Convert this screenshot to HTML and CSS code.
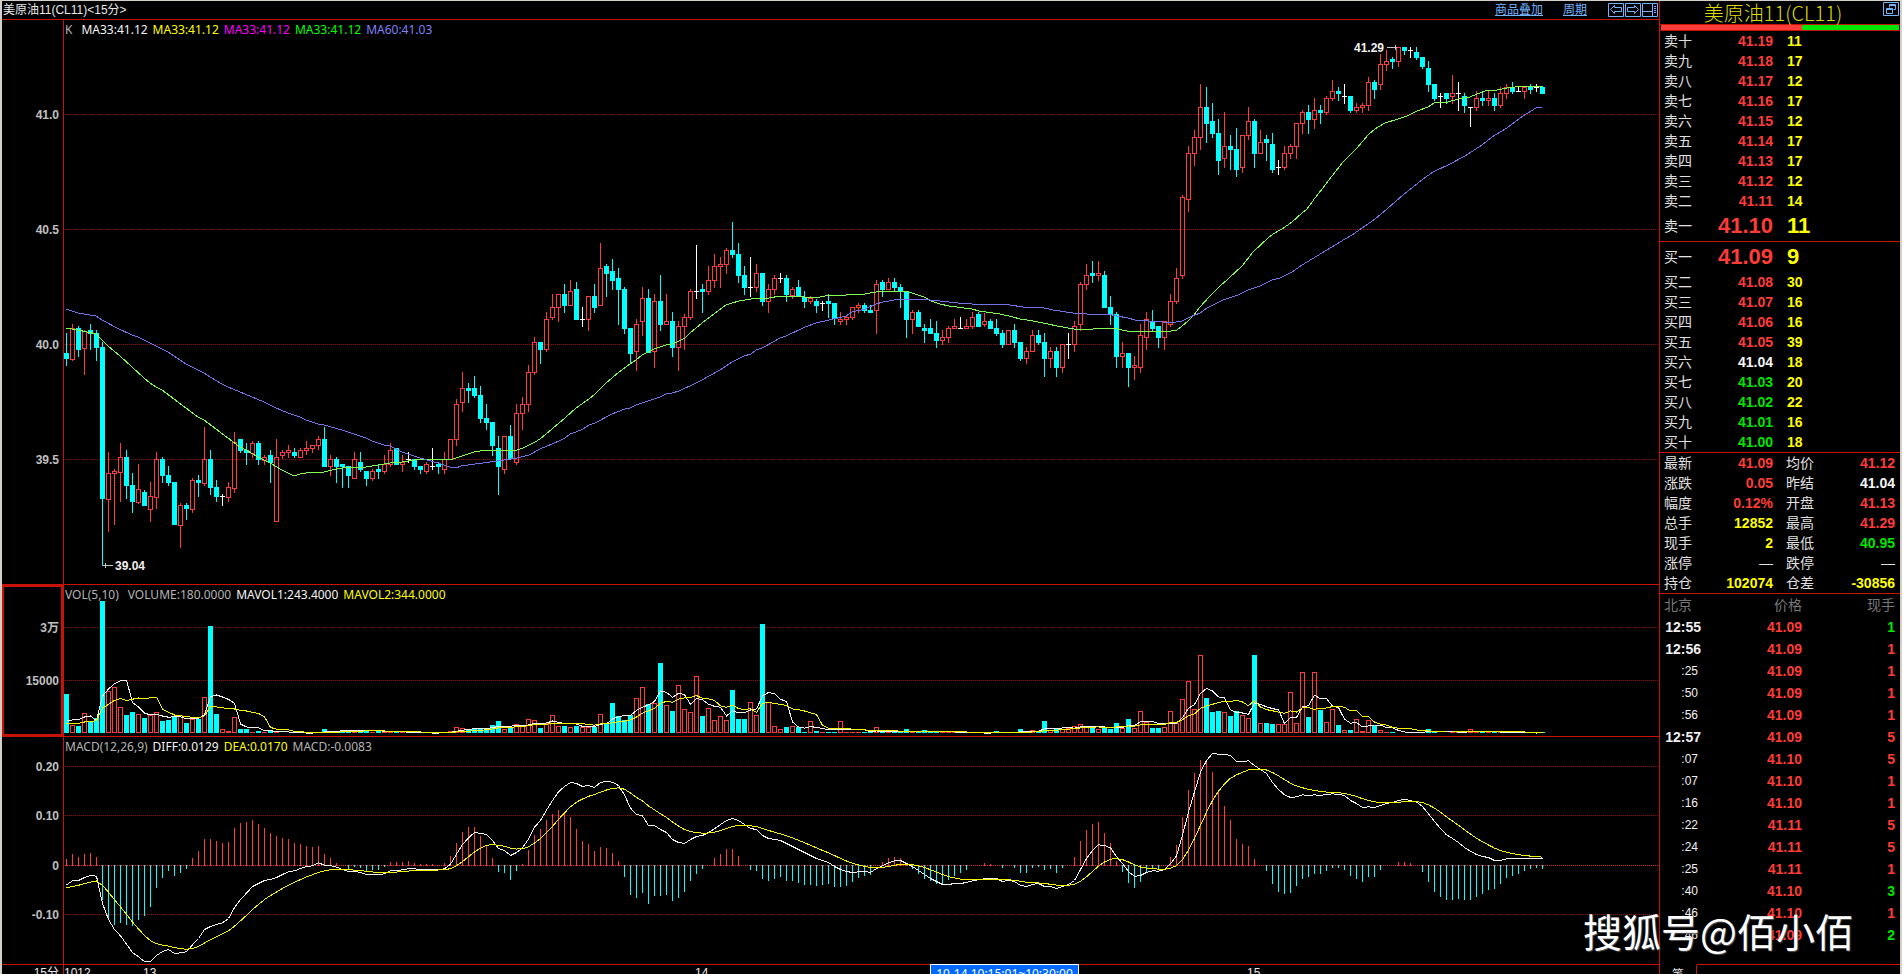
FILE: index.html
```html
<!DOCTYPE html>
<html lang="zh-CN">
<head>
<meta charset="utf-8">
<title>美原油11(CL11)</title>
<link rel="stylesheet" href="styles.css">
</head>
<body>
<div class="terminal">
  <main class="charts">
    <header class="toolbar">
      <h1 class="toolbar-title">美原油11(CL11)&lt;15分&gt;</h1>
      <nav class="toolbar-links">
        <a class="tool-link" href="#overlay">商品叠加</a>
        <a class="tool-link" href="#period">周期</a>
      </nav>
      <div class="toolbar-buttons">
        <button class="icon-btn" type="button" aria-label="向左"><svg width="16" height="14" viewBox="0 0 16 14"><path d="M.5.5h15v13H.5zM2.5 6.500l4-4v2h7v4h-7v2z"/></svg></button>
        <button class="icon-btn" type="button" aria-label="向右"><svg width="16" height="14" viewBox="0 0 16 14"><path d="M.5.5h15v13H.5zM13.500 6.500l-4-4v2h-7v4h7v2z"/></svg></button>
        <button class="icon-btn" type="button" aria-label="布局"><svg width="16" height="14" viewBox="0 0 16 14"><path d="M.5.5h15v13H.5zM10.500.5v13M.5 8.500h10M12 3.500h2M12 5.500h2M12 7.500h2M12 9.500h2"/></svg></button>
      </div>
    </header>

    <section class="panel panel-price">
      <svg class="axis" id="price-axis"></svg>
      <div class="plot">
        <p class="legend"><span class="c-gray legend-lead">K</span><span class="c-white">MA33:41.12</span><span class="c-yellow">MA33:41.12</span><span class="c-magenta">MA33:41.12</span><span class="c-lime">MA33:41.12</span><span class="c-violet">MA60:41.03</span></p>
        <svg class="canvas" id="price-plot"></svg>
      </div>
    </section>

    <section class="panel panel-volume">
      <svg class="axis axis-active" id="volume-axis"></svg>
      <div class="plot">
        <p class="legend"><span class="c-gray legend-lead">VOL(5,10)</span><span class="c-gray">VOLUME:180.0000</span><span class="c-white">MAVOL1:243.4000</span><span class="c-yellow">MAVOL2:344.0000</span></p>
        <svg class="canvas" id="volume-plot"></svg>
      </div>
    </section>

    <section class="panel panel-macd">
      <svg class="axis" id="macd-axis"></svg>
      <div class="plot">
        <p class="legend"><span class="c-gray">MACD(12,26,9)</span><span class="c-white">DIFF:0.0129</span><span class="c-yellow">DEA:0.0170</span><span class="c-gray">MACD:-0.0083</span></p>
        <svg class="canvas" id="macd-plot"></svg>
      </div>
    </section>

    <footer class="panel panel-time">
      <span class="period">15分</span>
      <div class="timeline">
        <svg class="canvas" id="time-plot"></svg>
        <span class="time-cursor">10-14 10:15:01~10:30:00</span>
      </div>
    </footer>
  </main>

  <aside class="quote">
    <div class="quote-head">
      <h2 class="quote-title">美原油11(CL11)</h2>
      <button class="icon-btn restore" type="button" aria-label="还原"><svg width="16" height="14" viewBox="0 0 16 14"><path d="M.5.5h15v13H.5zM6.500 5.500v-3h6v5h-2M6.500 3.500h6M3.500 6.500h6v5h-6zM3.500 7.500h6"/></svg></button>
    </div>
    <div class="ratio"><span class="ratio-sell"></span><span class="ratio-buy"></span></div>

    <table class="book">
      <tbody>
        <tr><th>卖十</th><td class="c-red">41.19</td><td class="qty">11</td></tr>
        <tr><th>卖九</th><td class="c-red">41.18</td><td class="qty">17</td></tr>
        <tr><th>卖八</th><td class="c-red">41.17</td><td class="qty">12</td></tr>
        <tr><th>卖七</th><td class="c-red">41.16</td><td class="qty">17</td></tr>
        <tr><th>卖六</th><td class="c-red">41.15</td><td class="qty">12</td></tr>
        <tr><th>卖五</th><td class="c-red">41.14</td><td class="qty">17</td></tr>
        <tr><th>卖四</th><td class="c-red">41.13</td><td class="qty">17</td></tr>
        <tr><th>卖三</th><td class="c-red">41.12</td><td class="qty">12</td></tr>
        <tr><th>卖二</th><td class="c-red">41.11</td><td class="qty">14</td></tr>
        <tr class="best"><th>卖一</th><td class="c-red">41.10</td><td class="qty">11</td></tr>
      </tbody>
    </table>
    <table class="book">
      <tbody>
        <tr class="best"><th>买一</th><td class="c-red">41.09</td><td class="qty">9</td></tr>
        <tr><th>买二</th><td class="c-red">41.08</td><td class="qty">30</td></tr>
        <tr><th>买三</th><td class="c-red">41.07</td><td class="qty">16</td></tr>
        <tr><th>买四</th><td class="c-red">41.06</td><td class="qty">16</td></tr>
        <tr><th>买五</th><td class="c-red">41.05</td><td class="qty">39</td></tr>
        <tr><th>买六</th><td class="c-white">41.04</td><td class="qty">18</td></tr>
        <tr><th>买七</th><td class="c-green">41.03</td><td class="qty">20</td></tr>
        <tr><th>买八</th><td class="c-green">41.02</td><td class="qty">22</td></tr>
        <tr><th>买九</th><td class="c-green">41.01</td><td class="qty">16</td></tr>
        <tr><th>买十</th><td class="c-green">41.00</td><td class="qty">18</td></tr>
      </tbody>
    </table>

    <table class="stats">
      <colgroup><col class="col-a"><col class="col-b"><col class="col-c"><col></colgroup>
      <tbody>
        <tr><th>最新</th><td class="c-red">41.09</td><th>均价</th><td class="c-red">41.12</td></tr>
        <tr><th>涨跌</th><td class="c-red">0.05</td><th>昨结</th><td class="c-white">41.04</td></tr>
        <tr><th>幅度</th><td class="c-red">0.12%</td><th>开盘</th><td class="c-red">41.13</td></tr>
        <tr><th>总手</th><td class="c-yellow">12852</td><th>最高</th><td class="c-red">41.29</td></tr>
        <tr><th>现手</th><td class="c-yellow">2</td><th>最低</th><td class="c-green">40.95</td></tr>
        <tr><th>涨停</th><td class="none">—</td><th>跌停</th><td class="none">—</td></tr>
        <tr><th>持仓</th><td class="c-yellow">102074</td><th>仓差</th><td class="c-yellow">-30856</td></tr>
      </tbody>
    </table>

    <table class="ticks">
      <thead><tr><th>北京</th><th>价格</th><th>现手</th></tr></thead>
      <tbody>
        <tr><td>12:55</td><td>41.09</td><td class="c-green">1</td></tr>
        <tr><td>12:56</td><td>41.09</td><td>1</td></tr>
        <tr><td class="sec">:25</td><td>41.09</td><td>1</td></tr>
        <tr><td class="sec">:50</td><td>41.09</td><td>1</td></tr>
        <tr><td class="sec">:56</td><td>41.09</td><td>1</td></tr>
        <tr><td>12:57</td><td>41.09</td><td>5</td></tr>
        <tr><td class="sec">:07</td><td>41.10</td><td>5</td></tr>
        <tr><td class="sec">:07</td><td>41.10</td><td>1</td></tr>
        <tr><td class="sec">:16</td><td>41.10</td><td>1</td></tr>
        <tr><td class="sec">:22</td><td>41.11</td><td>5</td></tr>
        <tr><td class="sec">:24</td><td>41.11</td><td>5</td></tr>
        <tr><td class="sec">:25</td><td>41.11</td><td>1</td></tr>
        <tr><td class="sec">:40</td><td>41.10</td><td class="c-green">3</td></tr>
        <tr><td class="sec">:46</td><td>41.10</td><td>1</td></tr>
        <tr><td class="sec">:46</td><td>41.09</td><td class="c-green">2</td></tr>
      </tbody>
    </table>

    <div class="tabs"><button class="tab" type="button">笔</button><span class="tab-rest"></span></div>
  </aside>
  <div class="watermark">搜狐号@佰小佰</div>
</div>
<script src="chart.js"></script>
</body>
</html>
```
FILE: styles.css
```css
* { box-sizing: border-box; }

body {
  margin: 0;
  background: #000;
  color: #e8e8e8;
  font-family: "Liberation Sans", "Noto Sans CJK SC", sans-serif;
  font-size: 12px;
}

.terminal {
  position: relative;
  display: grid;
  grid-template-columns: minmax(0, 1fr) 241px;
  height: 100vh;
  overflow: hidden;
  border: solid #d4d0c8;
  border-width: 1px 2px 0 2px;
}

.c-white { color: #f4f4f4; }
.c-gray { color: #b4b4b4; }
.c-yellow { color: #ffff00; }
.c-magenta { color: #ff00ff; }
.c-lime { color: #00ff00; }
.c-green { color: #00e600; }
.c-violet { color: #8080f8; }
.c-red { color: #ff3c38; }

/* chart column */
.charts { display: flex; flex-direction: column; min-width: 0; }

.toolbar {
  display: flex;
  align-items: center;
  height: 19px;
  padding: 0 1px;
  border-bottom: 1px solid #c81408;
}
.toolbar-title { flex: 1; margin: 0; font-size: 12px; font-weight: normal; line-height: 18px; }
.toolbar-links { display: flex; gap: 20px; margin-right: 21px; }
.tool-link { color: #74b4ff; line-height: 18px; }
.toolbar-buttons { display: flex; gap: 1px; }
.icon-btn { display: block; padding: 0; border: 0; background: none; color: #74b4ff; line-height: 0; }
.icon-btn svg { fill: none; stroke: currentColor; }

.panel { display: grid; grid-template-columns: 62px minmax(0, 1fr); border-bottom: 1px solid #c81408; }
.panel-price { height: 565px; }
.panel-volume { height: 152px; }
.panel-macd { height: 228px; }
.panel-time { border-bottom: 0; }

.axis { width: 62px; height: 100%; border-right: 1px solid #c81408; overflow: hidden; }
.axis text { fill: #c0c0c0; font-size: 12px; font-weight: bold; text-anchor: end; }
.axis-active { box-shadow: inset 0 0 0 2px #c81408; }

.plot { position: relative; min-width: 0; }
.canvas { display: block; width: 100%; height: 100%; }
.legend {
  position: absolute;
  top: 1px;
  left: 1px;
  display: flex;
  gap: 5px;
  margin: 0;
  font-family: "Noto Sans", sans-serif;
  line-height: 18px;
  white-space: nowrap;
}
.legend-lead { margin-right: 4px; }

.grid-line { stroke: #960c08; stroke-dasharray: 1 1; shape-rendering: crispEdges; }
.grid-zero { stroke: #e03030; }
.bars { fill: none; shape-rendering: crispEdges; }
.up { fill: none; stroke: #ff3c38; }
.down { fill: #00ffff; }
.down-line { stroke: #00ffff; }
.flat-line { stroke: #ffffff; }
.curve { fill: none; shape-rendering: crispEdges; }
.curve-white { stroke: #f0f0f0; }
.curve-yellow { stroke: #f4f400; }
.curve-green { stroke: #00ff00; }
.curve-pale { stroke: #ffffa0; opacity: .5; }
.curve-violet { stroke: #7474e8; }
.mark { fill: #f0f0f0; font-size: 12px; font-weight: bold; }
.mark-arrow { fill: none; stroke: #c8c8c8; }

.period { height: 100%; padding-right: 4px; border-right: 1px solid #c81408; line-height: 16px; text-align: right; }
.timeline { position: relative; height: 20px; }
.timeline text { fill: #e8e8e8; font-size: 12px; }
.time-cursor {
  position: absolute;
  top: -1px;
  left: 866px;
  width: 149px;
  border: 1px solid #fff;
  background: #0068ff;
  color: #fff;
  font-family: "Noto Sans", sans-serif;
  line-height: 18px;
  text-align: center;
  white-space: nowrap;
}

/* quote column */
.quote { display: flex; flex-direction: column; border-left: 1px solid #c81408; }
.quote-head { position: relative; height: 24px; border-bottom: 1px solid #c81408; }
.quote-title {
  margin: 0;
  color: #dcdc00;
  font-family: "Noto Sans CJK SC", sans-serif;
  font-size: 20px;
  font-weight: 300;
  line-height: 23px;
  padding-right: 14px;
  text-align: center;
}
.restore { position: absolute; top: 1px; right: 1px; }
.ratio { display: flex; height: 6px; padding: 0 1px; border-bottom: 1px solid #c81408; }
.ratio-sell { flex: 141; background: #ff3c38; }
.ratio-buy { flex: 97; background: #00e600; }

table { width: 100%; border-collapse: collapse; table-layout: fixed; font-size: 14px; }
th, td { padding: 0; }
th { color: #e0e0e0; font-weight: normal; text-align: left; }
td { font-weight: bold; text-align: right; }

.book, .stats { border-bottom: 1px solid #c81408; }
.book tr, .stats tr { height: 20px; line-height: 20px; }
.book th { width: 50px; padding-left: 4px; }
.book td { width: 63px; }
.book .qty { width: auto; padding-left: 14px; color: #ffff00; text-align: left; }
.book .best { height: 30px; line-height: 30px; }
.best td { font-size: 22px; }

.col-a { width: 50px; }
.col-b { width: 63px; }
.col-c { width: 55px; }
.stats th { padding-left: 4px; }
.stats td + th { padding-left: 13px; }
.stats td:last-child { padding-right: 5px; }
.stats .none { color: #e0e0e0; font-weight: normal; }

.ticks tr { height: 22px; line-height: 22px; }
.ticks th { color: #787878; text-align: right; }
.ticks th:first-child { width: 41px; padding-left: 4px; text-align: left; white-space: nowrap; }
.ticks th:nth-child(2) { width: 101px; }
.ticks th:last-child, .ticks td:last-child { padding-right: 5px; }
.ticks td { color: #ff3c38; }
.ticks td:first-child { color: #f0f0f0; }
.ticks td.sec { padding-right: 3px; font-size: 12px; font-weight: normal; }
.ticks td.c-green { color: #00e600; }

.tabs { display: grid; grid-template-columns: 36px 1fr; flex: 1; padding-top: 18px; }
.tab { padding: 0; border: 0; background: none; color: #e0e0e0; font: inherit; line-height: 16px; }
.tab-rest { border: solid #c81408; border-width: 1px 0 0 1px; border-radius: 2px 0 0 0; }

.watermark {
  position: absolute;
  right: 46px;
  bottom: 16px;
  color: #fff;
  font-family: "Noto Sans CJK SC", sans-serif;
  font-size: 39px;
  line-height: 56px;
  text-shadow: 1px 1px 1px #555;
}
```
FILE: chart.js
```js
// Candles, one every 6px: kind (r rise, c fall, w flat), then high, body top, body bottom, low.
const CANDLES = `
c 333 353 359 366|r 324 328 359 361|c 326 328 350 357|r 330 331 348 375|c 324 330 334 350|c 330 333 348 361
c 342 347 499 566|r 452 473 499 532|r 469 471 473 525|r 443 457 472 502|c 450 457 486 499|c 473 485 502 513
r 464 489 502 504|c 490 492 506 506|r 482 496 509 522|r 452 459 497 509|c 457 459 476 483|c 466 475 483 486
c 482 482 525 525|r 503 505 525 548|c 503 505 509 520|r 478 480 509 513|c 475 480 483 497|r 427 459 483 486
c 450 459 488 495|c 480 487 497 502|w 494 496 496 506|r 482 487 497 502|r 432 442 488 493|c 439 439 451 453
c 443 450 453 465|r 441 443 453 458|c 441 443 460 465|r 455 457 460 465|c 450 455 463 483|r 439 457 521 521
r 450 452 455 459|r 445 450 452 458|c 448 452 456 458|r 448 450 457 457|r 441 448 450 455|r 445 445 448 453
r 436 439 445 450|c 427 439 467 467|r 455 459 466 476|c 457 459 467 483|c 464 464 467 488|c 466 466 476 488
r 452 459 478 478|c 452 462 470 472|c 471 471 479 486|r 469 471 478 481|c 464 469 472 479|r 455 464 471 474
r 443 450 464 467|c 448 448 465 465|r 455 462 464 472|w 452 459 459 463|c 459 459 467 470|c 466 466 470 474
r 462 464 471 474|w 448 466 466 470|c 462 464 467 474|r 452 459 469 474|r 439 439 459 459|r 399 404 439 446
r 372 388 402 412|c 383 388 391 403|c 376 388 396 398|c 386 395 419 423|c 404 418 423 430|c 422 422 446 456
c 436 448 467 495|r 436 436 469 474|c 425 436 459 460|r 404 413 462 465|r 397 404 413 430|r 365 372 404 412
r 337 342 372 375|c 342 342 350 364|r 312 319 349 352|r 294 307 317 320|r 294 294 307 322|c 284 294 306 313
r 280 291 305 306|c 282 289 320 320|w 307 319 319 327|r 296 296 319 331|c 284 296 308 313|r 243 268 305 306
c 264 266 274 297|c 259 271 281 290|c 268 278 290 325|c 287 289 329 334|c 328 328 354 364|r 319 324 351 371
r 287 298 321 336|c 289 298 353 353|r 294 301 351 368|c 275 301 325 331|r 294 321 324 325|c 312 321 348 357
r 321 326 347 371|r 314 317 326 350|r 289 291 317 320|w 245 291 291 299|c 284 289 292 313|r 266 280 291 295
r 254 266 280 288|r 257 264 266 288|r 248 250 264 274|c 222 250 255 258|c 243 254 276 283|c 266 275 288 295
w 257 287 287 297|r 264 273 287 292|c 273 273 302 306|r 284 289 301 313|r 275 278 289 295|w 273 278 278 283
c 275 278 295 302|r 287 289 295 299|c 280 287 297 297|c 291 297 302 308|r 296 298 301 304|c 299 301 306 313
w 301 303 303 311|c 294 301 304 318|c 303 303 319 325|r 312 319 321 325|r 315 317 319 325|r 307 307 317 320
r 303 305 307 313|c 303 305 311 313|c 305 310 313 313|r 280 284 310 334|c 280 282 290 297|r 278 282 289 290
c 278 282 288 291|c 284 287 292 308|c 291 291 320 338|r 310 312 319 334|c 310 312 327 327|c 324 328 331 343
c 319 328 334 334|c 321 333 341 348|r 330 337 340 345|r 326 328 337 343|r 319 326 328 329|w 317 328 328 329
r 319 326 328 329|r 312 317 326 329|c 312 314 327 327|r 313 321 324 327|c 319 321 329 329|c 319 328 334 336
c 330 333 345 348|r 330 330 344 345|c 324 330 343 348|c 342 342 359 361|r 347 351 358 364|r 330 335 351 352
c 330 335 343 345|c 333 342 359 377|r 347 351 358 368|c 347 351 368 377|r 344 344 367 373|w 333 344 344 359
r 321 326 344 352|r 282 284 324 331|r 264 275 284 290|c 261 273 276 283|r 261 273 275 281|c 271 275 308 308
c 296 307 315 325|c 312 314 357 368|r 342 353 356 368|c 353 353 368 387|r 356 365 367 380|r 324 335 367 373
r 312 319 337 350|c 310 321 329 331|c 326 326 338 348|r 321 321 337 350|r 294 301 324 327|r 268 278 301 304
r 195 197 275 279|r 146 153 199 212|r 130 137 153 166|r 84 107 137 150|c 87 107 124 143|c 103 121 134 138
c 119 133 161 175|r 112 146 158 168|c 135 146 150 170|c 128 149 170 177|r 135 135 167 173|r 107 121 135 140
c 119 121 154 168|r 130 142 153 154|c 135 139 143 161|c 133 144 170 173|w 160 167 167 175|r 146 153 167 170
r 144 146 153 159|r 123 123 146 159|r 110 112 123 134|c 105 112 120 134|r 98 110 119 129|c 105 110 113 124
r 96 98 112 115|r 80 91 98 101|c 87 91 94 101|w 84 96 96 104|c 96 96 111 113|r 103 107 110 113
r 103 105 107 113|r 77 82 105 111|c 80 82 90 99|r 54 64 84 90|r 50 61 64 71|c 57 59 62 69
r 47 47 61 67|c 47 47 51 55|w 47 50 50 58|c 47 52 58 60|c 57 57 67 69|c 61 68 85 92
c 84 84 99 101|w 93 96 96 108|c 93 93 99 104|r 75 93 96 104|w 82 93 93 111|c 93 96 106 113
w 107 107 107 127|r 91 98 107 111|c 92 98 101 106|r 91 98 100 106|c 93 98 106 111|r 87 93 105 108
r 84 87 93 99|c 82 87 92 94|w 87 91 91 92|r 86 87 91 99|c 84 86 90 94|w 84 87 87 92|c 86 87 94 94`
  .trim().split(/[|\n]/).map(s => { const [k, ...v] = s.split(' '); return [k, ...v.map(Number)]; });

const MA33 = `66,328 78,330 96,334 102,340 108,346 120,356 132,367 144,378 150,383 156,387 162,390 174,399 186,408 198,417 204,420 216,429 228,438 240,447 246,450 258,457 270,463 282,470 294,476 300,474 306,473 324,472 336,469 342,468 366,467 378,465 390,463 402,462 420,459 450,460 462,456 474,452 486,450 517,450 523,448 529,445 535,442 540,439 546,434 552,429 559,423 565,418 576,408 589,399 595,394 606,383 619,372 630,364 636,360 642,355 654,349 666,345 672,344 679,341 685,338 690,333 702,323 715,313 726,305 732,303 739,301 751,299 762,298 769,298 780,296 797,296 804,297 816,298 829,295 840,296 846,295 865,294 876,292 883,291 906,291 912,293 924,297 931,301 940,304 949,306 972,309 979,311 1000,314 1013,317 1020,319 1033,321 1048,324 1057,326 1074,329 1093,329 1098,328 1113,328 1127,331 1171,331 1177,330 1182,326 1188,321 1194,315 1200,307 1210,296 1220,286 1228,279 1242,266 1253,252 1268,238 1273,234 1282,229 1292,222 1302,213 1307,209 1315,198 1326,184 1332,176 1343,162 1357,148 1368,135 1375,129 1385,123 1398,119 1407,116 1417,111 1428,107 1434,103 1448,102 1458,99 1470,97 1477,94 1488,90 1497,90 1507,88 1523,86 1542,86`;

const MA60 = `66,309 78,313 96,316 102,320 117,328 132,335 138,337 156,346 168,352 186,364 204,373 210,377 222,384 228,387 240,392 252,397 264,402 276,408 288,413 300,417 306,420 318,424 324,425 342,430 366,438 372,441 384,445 390,446 402,452 420,458 438,463 450,467 456,468 461,466 490,462 504,460 517,458 529,455 540,449 559,441 565,438 570,434 576,432 583,429 589,425 595,423 612,414 625,409 630,408 636,405 660,397 666,394 672,393 679,391 685,388 690,386 702,380 709,376 720,370 732,362 744,356 751,354 756,350 762,348 775,341 780,338 786,336 805,327 816,323 829,320 846,316 852,312 865,309 876,304 883,302 900,299 919,299 940,301 958,303 972,304 979,305 990,304 1010,305 1023,307 1040,307 1053,310 1073,313 1087,314 1107,314 1117,316 1128,318 1135,320 1163,322 1171,323 1182,321 1190,317 1200,313 1207,308 1213,305 1223,300 1238,295 1248,290 1260,286 1272,280 1280,278 1292,272 1302,265 1322,253 1345,239 1352,235 1375,219 1387,209 1403,195 1423,179 1433,172 1450,164 1465,156 1482,145 1492,137 1507,128 1523,116 1536,108 1542,107`;

// Volume bar heights in pixels.
const VOLUME = [
  39,8,7,20,11,15,132,42,46,26,18,21,19,15,18,21,12,13,17,18,10,14,14,36,107,19,4,2,16,4,4,1,2,1,3,1,0,0,0,0,
  0,0,1,4,2,1,3,2,3,2,3,1,2,1,1,1,1,0,0,0,0,0,0,1,2,6,5,4,4,5,5,8,12,4,5,9,8,14,13,5,
  10,18,7,7,6,7,6,6,6,19,9,30,17,13,18,35,46,29,30,70,28,22,48,24,21,57,17,25,13,17,13,43,14,14,31,18,109,31,7,4,
  6,7,6,1,12,2,1,1,1,12,1,1,1,1,1,6,1,1,1,1,4,1,1,3,1,1,1,1,1,0,0,0,0,0,0,2,0,0,0,4,
  1,3,1,12,3,5,4,5,7,9,7,5,4,5,4,10,5,14,5,22,11,5,5,6,22,10,34,52,24,78,35,21,22,21,17,22,18,15,78,10,
  10,9,9,9,41,10,61,16,61,23,11,24,8,3,3,14,2,13,8,3,1,1,0,0,1,1,1,4,2,0,0,1,1,1,4,1,1,1,1,1,
  1,0,0,0,0,0,1];

// MACD bar heights in pixels, signed.
const MACD = [
  6,11,8,11,12,8,-35,-53,-60,-58,-60,-61,-55,-51,-42,-23,-13,-6,-11,-8,-4,7,14,26,26,24,22,23,37,42,43,45,41,37,32,29,27,26,22,21,
  19,18,19,11,7,2,0,-4,-2,-3,-6,-5,-5,-2,3,3,3,4,2,1,1,1,0,2,9,22,33,38,38,29,20,7,-7,-8,-15,-6,1,15,30,36,
  45,51,55,51,48,36,24,21,14,18,17,12,4,-12,-30,-33,-28,-39,-31,-31,-30,-36,-33,-27,-16,-9,-4,0,7,11,16,16,9,0,-5,-6,-14,-16,-14,-12,
  -16,-16,-18,-20,-20,-21,-20,-19,-22,-22,-21,-17,-13,-11,-10,0,3,7,8,7,1,-4,-9,-14,-16,-19,-19,-15,-11,-8,-5,0,0,2,1,0,-3,0,-3,-8,
  -8,-3,-2,-5,-4,-8,-3,0,8,24,35,41,43,32,22,4,-7,-18,-23,-17,-7,-4,-4,0,8,20,48,75,92,105,103,93,74,59,45,26,21,19,6,0,
  -6,-19,-27,-29,-28,-21,-14,-12,-9,-9,-6,-3,-3,-5,-11,-14,-17,-12,-12,-5,0,0,3,3,2,0,-7,-17,-27,-32,-35,-35,-34,-35,-35,-32,-29,-25,-24,-19,
  -13,-11,-9,-6,-4,-3,-4];

// DIFF samples: 886 is zero and 0.10 equals 148 units, three units to a pixel.
const DIFF = [
  944,932,931,922,916,918,1000,1048,1078,1097,1122,1147,1160,1174,1174,1156,1144,1138,1150,1148,1145,1124,1105,1078,1069,1063,1058,1045,1012,988,969,949,940,931,928,922,913,905,902,895,
  889,887,878,885,886,891,898,904,904,907,913,913,913,911,902,902,899,896,896,899,898,898,898,896,882,852,823,803,787,790,793,811,835,841,856,847,833,807,771,751,
  720,691,665,649,637,640,649,646,652,637,634,636,646,674,714,733,737,766,766,778,787,808,817,820,808,799,796,787,776,763,751,745,751,763,775,778,796,805,808,811,
  820,829,838,847,856,865,871,877,889,898,904,907,905,904,907,895,887,878,872,871,880,889,901,913,925,934,943,943,940,940,937,932,929,926,925,925,934,931,934,946,
  949,943,940,949,949,955,949,943,931,898,865,841,824,826,833,859,880,904,919,916,907,902,903,898,881,857,795,726,665,606,571,550,552,553,556,574,574,572,586,598,
  610,637,658,674,682,680,674,676,674,676,673,671,673,676,691,700,712,710,712,706,700,697,691,688,691,696,709,731,754,775,794,805,817,832,843,853,859,862,871,871,
  866,866,866,866,866,866,866];

const NS = 'http://www.w3.org/2000/svg';
const PLOT_LEFT = 64;
const x = i => 66 + 6 * i;

function add(parent, name, attrs, text) {
  const el = document.createElementNS(NS, name);
  for (const k in attrs) el.setAttribute(k, attrs[k]);
  if (text !== undefined) el.textContent = text;
  parent.appendChild(el);
  return el;
}

function layer(id, top) {
  return add(document.getElementById(id), 'g', { transform: `translate(${-PLOT_LEFT} ${-top})` });
}

function gridAndLabels(plot, axisId, top, marks) {
  const axis = document.getElementById(axisId);
  for (const [y, label] of marks) {
    add(plot, 'line', { class: label === '0' ? 'grid-line grid-zero' : 'grid-line', x1: PLOT_LEFT + 1, x2: 6000, y1: y + .5, y2: y + .5 });
    add(axis, 'text', { x: 57, y: y - top + 5 }, label);
  }
}

function vline(g, cls, cx, y1, y2) {
  if (y2 > y1) add(g, 'line', { class: cls, x1: cx + .5, x2: cx + .5, y1, y2 });
}

function curve(g, cls, points) {
  add(g, 'polyline', { class: 'curve ' + cls, points });
}

// Price
const price = layer('price-plot', 20);
gridAndLabels(price, 'price-axis', 20, [[114, '41.0'], [229, '40.5'], [344, '40.0'], [459, '39.5']]);
const candles = add(price, 'g', { class: 'bars' });
CANDLES.forEach(([k, hi, top, bottom, lo], i) => {
  const cx = x(i);
  if (k === 'r') {
    vline(candles, 'up', cx, hi, top);
    vline(candles, 'up', cx, bottom, lo);
    add(candles, 'rect', { class: 'up', x: cx - 1.5, y: top + .5, width: 4, height: Math.max(bottom - top, 1) });
  } else if (k === 'c') {
    vline(candles, 'down-line', cx, hi, lo);
    add(candles, 'rect', { class: 'down', x: cx - 2, y: top, width: 5, height: bottom - top });
  } else {
    vline(candles, 'flat-line', cx, hi, lo);
    add(candles, 'line', { class: 'flat-line', x1: cx - 2, x2: cx + 3, y1: top + .5, y2: top + .5 });
  }
});
curve(price, 'curve-green', MA33);
curve(price, 'curve-pale', MA33);
curve(price, 'curve-violet', MA60);
add(price, 'text', { class: 'mark', x: 1354, y: 52 }, '41.29');
add(price, 'path', { class: 'mark-arrow', d: 'M1387 47.500h10M1395.500 45v5' });
add(price, 'text', { class: 'mark', x: 115, y: 570 }, '39.04');
add(price, 'path', { class: 'mark-arrow', d: 'M103 565.500h10M105.500 563v5' });

// Volume
const VOL_BASE = 733;
const volume = layer('volume-plot', 585);
gridAndLabels(volume, 'volume-axis', 585, [[627, '3万'], [680, '15000']]);
const volBars = add(volume, 'g', { class: 'bars' });
VOLUME.forEach((h, i) => {
  if (!h) return;
  const cx = x(i);
  if (CANDLES[i][0] === 'c') add(volBars, 'rect', { class: 'down', x: cx - 2, y: VOL_BASE - h, width: 5, height: h });
  else add(volBars, 'rect', { class: 'up', x: cx - 1.5, y: VOL_BASE - h + .5, width: 4, height: Math.max(h - 1, .1) });
});
function average(n) {
  const padded = Array(n - 1).fill(6).concat(VOLUME);
  return VOLUME.map((_, i) => {
    const sum = padded.slice(i, i + n).reduce((a, b) => a + b, 0);
    return `${x(i) + .5},${VOL_BASE - sum / n}`;
  }).join(' ');
}
curve(volume, 'curve-white', average(5));
curve(volume, 'curve-yellow', average(10));

// MACD
const ZERO = 865;
const macd = layer('macd-plot', 737);
gridAndLabels(macd, 'macd-axis', 737, [[766, '0.20'], [815, '0.10'], [865, '0'], [914, '-0.10']]);
const macdBars = add(macd, 'g', { class: 'bars' });
MACD.forEach((h, i) => {
  if (h > 0) vline(macdBars, 'up', x(i), ZERO - h, ZERO + 1);
  if (h < 0) vline(macdBars, 'down-line', x(i), ZERO, ZERO - h);
});
const diffY = DIFF.map(v => ZERO + .5 + (v - 886) / 3);
let dea = diffY[0] + 3;
const deaY = diffY.map((v, i) => (i ? (dea += (v - dea) / 5) : dea));
const points = ys => ys.map((v, i) => `${x(i) + .5},${v}`).join(' ');
curve(macd, 'curve-white', points(diffY));
curve(macd, 'curve-yellow', points(deaY));

// Dates
const dates = layer('time-plot', 965);
for (const [px, label] of [[64, '1012'], [143, '13'], [695, '14'], [1247, '15']]) {
  add(dates, 'text', { x: px, y: 977 }, label);
}
```
